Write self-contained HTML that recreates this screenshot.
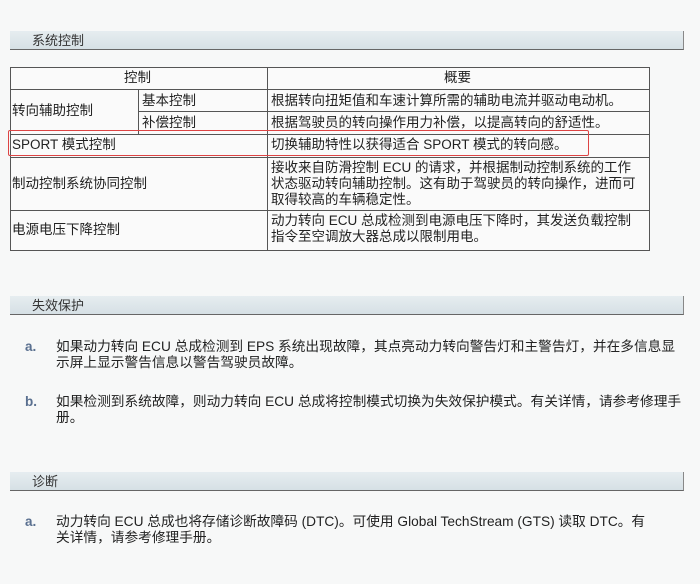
<!DOCTYPE html>
<html><head><meta charset="utf-8"><style>
body{margin:0;width:700px;height:584px;background:#f7f8f8;position:relative;overflow:hidden;font-family:"Liberation Sans","Noto Sans CJK SC",sans-serif;font-size:13.5px;color:#222}
.bar{position:absolute;left:10px;width:673px;height:18px;background:linear-gradient(#e6edf0,#d6e0e5);border-bottom:1px solid #666;border-right:1px solid #888;color:#333;font-size:13px;line-height:19px}
.bar span{position:absolute;left:22px}
.h{position:absolute;background:#555;height:1px}
.v{position:absolute;background:#555;width:1px}
.t{position:absolute;white-space:nowrap;line-height:16px}
.m{position:absolute;color:#5a7090;font-weight:bold;font-size:13.5px}
.it{font-size:13.7px}
</style></head><body>
<div class="bar" style="top:31px"><span>系统控制</span></div>
<div style="position:absolute;left:10px;top:67px;width:639px;height:183px;background:#fafafa"></div>
<div class="h" style="left:10px;top:67px;width:640px"></div>
<div class="h" style="left:10px;top:89px;width:640px"></div>
<div class="h" style="left:138px;top:111px;width:512px"></div>
<div class="h" style="left:10px;top:134px;width:640px"></div>
<div class="h" style="left:10px;top:157px;width:640px"></div>
<div class="h" style="left:10px;top:210px;width:640px"></div>
<div class="h" style="left:10px;top:250px;width:640px"></div>
<div class="v" style="left:10px;top:67px;height:184px"></div>
<div class="v" style="left:138px;top:89px;height:45px"></div>
<div class="v" style="left:267px;top:67px;height:184px"></div>
<div class="v" style="left:649px;top:67px;height:184px"></div>
<div style="position:absolute;left:8px;top:130px;width:579px;height:24px;border:1px solid #d44;border-radius:2px"></div>
<div class="t" style="left:124px;top:70px">控制</div>
<div class="t" style="left:444px;top:70px">概要</div>
<div class="t" style="left:12px;top:103px">转向辅助控制</div>
<div class="t" style="left:142px;top:93px">基本控制</div>
<div class="t" style="left:142px;top:115px;height:14px;overflow:hidden">补偿控制</div>
<div class="t" style="left:271px;top:93px">根据转向扭矩值和车速计算所需的辅助电流并驱动电动机。</div>
<div class="t" style="left:271px;top:115px;height:14px;overflow:hidden">根据驾驶员的转向操作用力补偿，以提高转向的舒适性。</div>
<div class="t" style="left:12px;top:137px">SPORT 模式控制</div>
<div class="t" style="left:271px;top:137px">切换辅助特性以获得适合 SPORT 模式的转向感。</div>
<div class="t" style="left:12px;top:176px">制动控制系统协同控制</div>
<div class="t" style="left:271px;top:160px">接收来自防滑控制 ECU 的请求，并根据制动控制系统的工作<br>状态驱动转向辅助控制。这有助于驾驶员的转向操作，进而可<br>取得较高的车辆稳定性。</div>
<div class="t" style="left:12px;top:222px">电源电压下降控制</div>
<div class="t" style="left:271px;top:213px">动力转向 ECU 总成检测到电源电压下降时，其发送负载控制<br>指令至空调放大器总成以限制用电。</div>

<div class="bar" style="top:296px"><span>失效保护</span></div>
<div class="m" style="left:25px;top:339px">a.</div>
<div class="t it" style="left:56px;top:339px">如果动力转向 ECU 总成检测到 EPS 系统出现故障，其点亮动力转向警告灯和主警告灯，并在多信息显<br>示屏上显示警告信息以警告驾驶员故障。</div>
<div class="m" style="left:25px;top:394px">b.</div>
<div class="t it" style="left:56px;top:394px">如果检测到系统故障，则动力转向 ECU 总成将控制模式切换为失效保护模式。有关详情，请参考修理手<br>册。</div>

<div class="bar" style="top:472px"><span>诊断</span></div>
<div class="m" style="left:25px;top:514px">a.</div>
<div class="t it" style="left:56px;top:514px">动力转向 ECU 总成也将存储诊断故障码 (DTC)。可使用 Global TechStream (GTS) 读取 DTC。有<br>关详情，请参考修理手册。</div>
</body></html>
